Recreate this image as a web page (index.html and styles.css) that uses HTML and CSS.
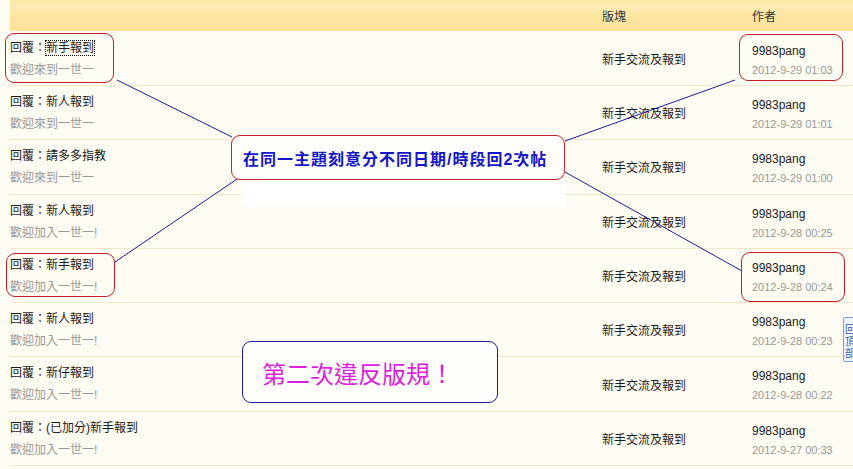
FILE: index.html
```html
<!DOCTYPE html>
<html lang="zh-Hant">

<head>
    <meta charset="UTF-8">
    <meta name="viewport" content="width=device-width, initial-scale=1.0">
    <title>回覆列表</title>
    <link rel="stylesheet" href="styles.css">
</head>

<body>
    <div class="page">
        <div class="list">
            <div class="row head">
                <div class="topic"></div>
                <div class="forum">版塊</div>
                <div class="author">作者</div>
            </div>

            <div class="row">
                <div class="topic">
                    <div class="title">回覆：<a class="focused">新手報到</a></div>
                    <div class="summary">歡迎來到一世一</div>
                </div>
                <div class="forum">新手交流及報到</div>
                <div class="author">
                    <div class="name">9983pang</div>
                    <div class="date">2012-9-29 01:03</div>
                </div>
            </div>

            <div class="row">
                <div class="topic">
                    <div class="title">回覆：新人報到</div>
                    <div class="summary">歡迎來到一世一</div>
                </div>
                <div class="forum">新手交流及報到</div>
                <div class="author">
                    <div class="name">9983pang</div>
                    <div class="date">2012-9-29 01:01</div>
                </div>
            </div>

            <div class="row">
                <div class="topic">
                    <div class="title">回覆：請多多指教</div>
                    <div class="summary">歡迎來到一世一</div>
                </div>
                <div class="forum">新手交流及報到</div>
                <div class="author">
                    <div class="name">9983pang</div>
                    <div class="date">2012-9-29 01:00</div>
                </div>
            </div>

            <div class="row">
                <div class="topic">
                    <div class="title">回覆：新人報到</div>
                    <div class="summary">歡迎加入一世一!</div>
                </div>
                <div class="forum">新手交流及報到</div>
                <div class="author">
                    <div class="name">9983pang</div>
                    <div class="date">2012-9-28 00:25</div>
                </div>
            </div>

            <div class="row">
                <div class="topic">
                    <div class="title">回覆：新手報到</div>
                    <div class="summary">歡迎加入一世一!</div>
                </div>
                <div class="forum">新手交流及報到</div>
                <div class="author">
                    <div class="name">9983pang</div>
                    <div class="date">2012-9-28 00:24</div>
                </div>
            </div>

            <div class="row">
                <div class="topic">
                    <div class="title">回覆：新人報到</div>
                    <div class="summary">歡迎加入一世一!</div>
                </div>
                <div class="forum">新手交流及報到</div>
                <div class="author">
                    <div class="name">9983pang</div>
                    <div class="date">2012-9-28 00:23</div>
                </div>
            </div>

            <div class="row">
                <div class="topic">
                    <div class="title">回覆：新仔報到</div>
                    <div class="summary">歡迎加入一世一!</div>
                </div>
                <div class="forum">新手交流及報到</div>
                <div class="author">
                    <div class="name">9983pang</div>
                    <div class="date">2012-9-28 00:22</div>
                </div>
            </div>

            <div class="row">
                <div class="topic">
                    <div class="title">回覆：(已加分)新手報到</div>
                    <div class="summary">歡迎加入一世一!</div>
                </div>
                <div class="forum">新手交流及報到</div>
                <div class="author">
                    <div class="name">9983pang</div>
                    <div class="date">2012-9-27 00:33</div>
                </div>
            </div>
        </div>

        <!-- annotations drawn on top of the screenshot -->
        <svg class="links" width="853" height="469" viewBox="0 0 853 469">
            <line x1="117" y1="80" x2="232" y2="137" />
            <line x1="735" y1="80" x2="565" y2="141" />
            <line x1="115" y1="262" x2="240" y2="177" />
            <line x1="565" y1="172" x2="742" y2="271" />
        </svg>

        <div class="mark mark-a"></div>
        <div class="mark mark-b"></div>
        <div class="mark mark-c"></div>
        <div class="mark mark-d"></div>

        <div class="patch"></div>
        <div class="note note-red">在同一主題刻意分不同日期/時段回2次帖</div>
        <div class="note note-blue">第二次違反版規！</div>

        <div class="to-top">回頂部</div>
    </div>
</body>

</html>
```

FILE: styles.css
```css
body {
    margin: 0;
    background-color: #fffcf3;
    font-family: "Liberation Sans", "Noto Sans CJK TC", sans-serif;
    font-size: 12px;
    color: #1a1a1a;
    overflow: hidden;
}

.page {
    position: relative;
    width: 853px;
    height: 469px;
}

.list {
    margin-left: 10px;
}

.row {
    display: flex;
    height: 53.3px;
    border-bottom: 1px solid #f3e7c6;
}

.row.head {
    height: 31.7px;
    border-bottom: none;
    align-items: center;
    padding-bottom: 1px;
    box-sizing: border-box;
    background: linear-gradient(#fde7a6, #feecb6 20%, #fde6a2 45%, #fde29a 97%, #fffcf3 97%);
    color: #333;
}

.topic {
    flex: 1;
    padding-top: 5px;
    line-height: 22px;
}

.head .topic {
    padding-top: 0;
}

.forum {
    width: 150px;
    align-self: center;
}

.author {
    width: 101px;
    padding-top: 10px;
}

.head .author {
    padding-top: 0;
}

.title a {
    color: #1a1a1a;
}

.focused {
    outline: 1px dotted #000;
    outline-offset: 0;
}

.summary {
    color: #999;
}

.name {
    line-height: 19px;
}

.date {
    font-size: 11px;
    line-height: 19px;
    color: #999;
}

.links {
    position: absolute;
    left: 0;
    top: 0;
}

.links line {
    stroke: #1c1c9c;
    stroke-width: 1;
}

.mark {
    position: absolute;
    border: 1px solid #c0202c;
    border-radius: 9px;
}

.mark-a {
    left: 5px;
    top: 33px;
    width: 107px;
    height: 48px;
}

.mark-b {
    left: 739px;
    top: 34px;
    width: 102px;
    height: 45px;
}

.mark-c {
    left: 6px;
    top: 253px;
    width: 107px;
    height: 42px;
}

.mark-d {
    left: 741px;
    top: 252px;
    width: 102px;
    height: 48px;
}

.patch {
    position: absolute;
    left: 241px;
    top: 179px;
    width: 324px;
    height: 28px;
    background-color: #fff;
}

.note {
    position: absolute;
    box-sizing: border-box;
    background-color: #fffefb;
    border-radius: 9px;
    display: flex;
    align-items: center;
}

.note-red {
    left: 231px;
    top: 135px;
    width: 334px;
    height: 45px;
    border: 1px solid #c8202c;
    padding-left: 11px;
    color: #1414c8;
    font-size: 16px;
    font-weight: bold;
    letter-spacing: 1px;
}

.note-blue {
    left: 242px;
    top: 341px;
    width: 256px;
    height: 62px;
    border: 1px solid #1a1aa0;
    padding-left: 19px;
    color: #de1ede;
    font-size: 24px;
}

.to-top {
    position: absolute;
    left: 843px;
    top: 317px;
    width: 14px;
    height: 45px;
    box-sizing: border-box;
    border: 1px solid #7d9bd0;
    border-radius: 2px;
    background-color: #eef3fb;
    color: #3b5fa8;
    font-size: 10px;
    line-height: 12px;
    padding: 6px 0 0 1px;
}
```
